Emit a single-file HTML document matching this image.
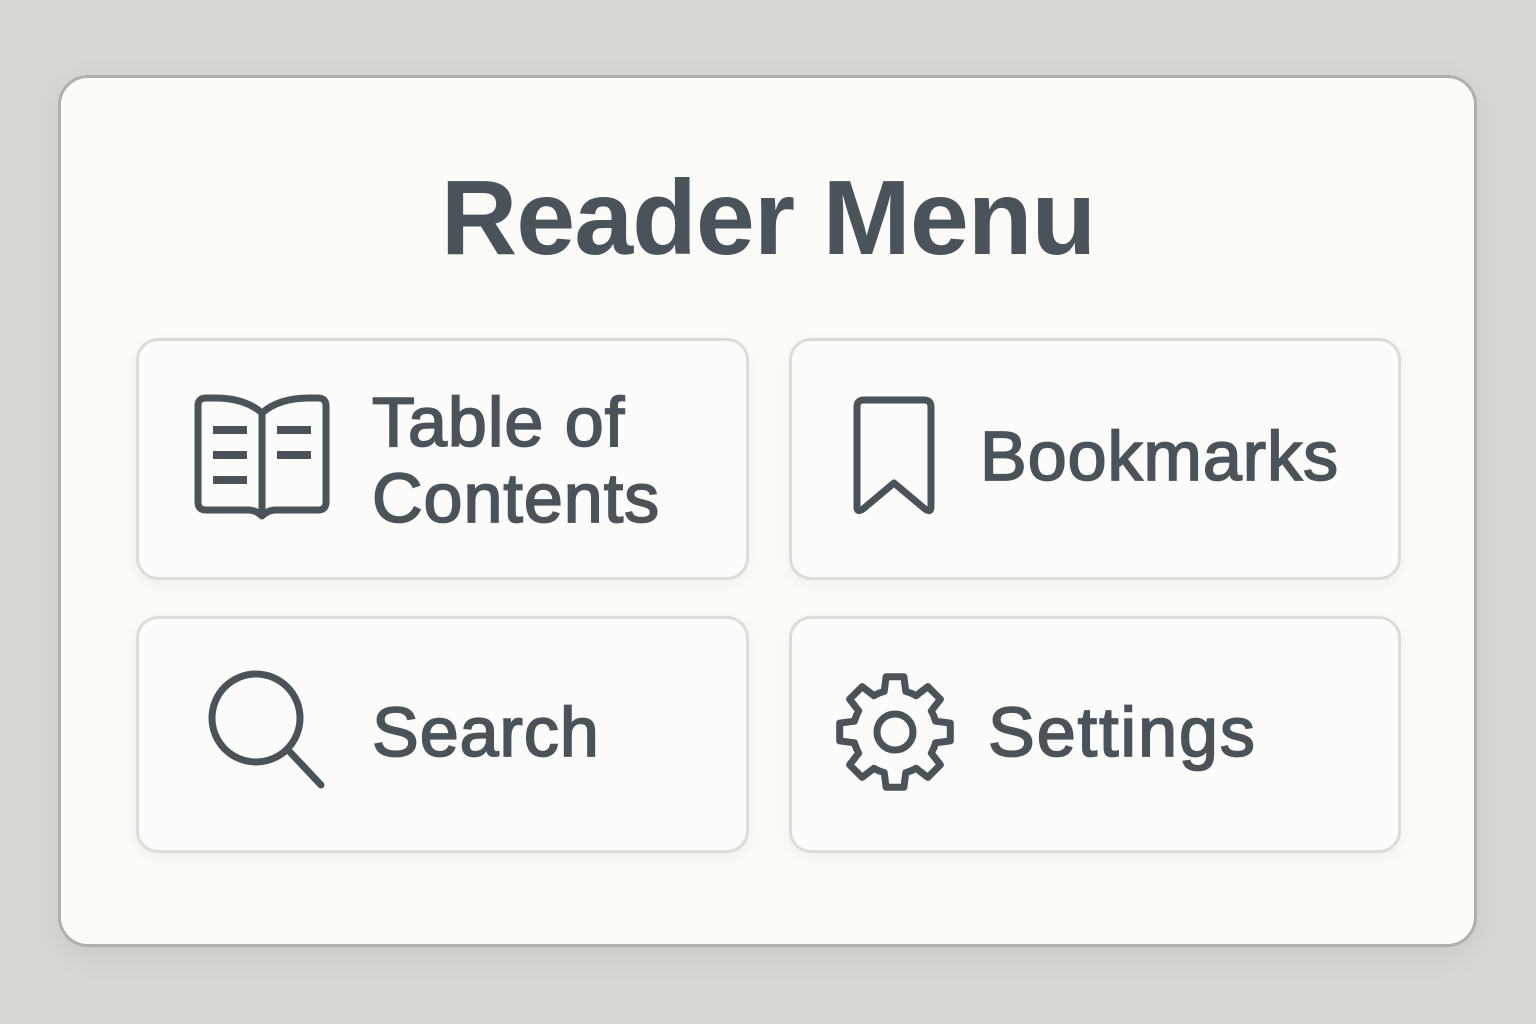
<!DOCTYPE html>
<html><head><meta charset="utf-8"><style>
html,body{margin:0;padding:0}
body{width:1536px;height:1024px;background:#d9d8d3;position:relative;overflow:hidden;font-family:"Liberation Sans",sans-serif;color:#4a525a}
.panel{position:absolute;left:58px;top:75px;width:1413px;height:866px;background:#fbfbf8;border:3px solid #b0b0ac;border-radius:30px;box-shadow:0 8px 30px rgba(0,0,0,0.08)}
h1{position:absolute;left:0;width:1536px;top:158px;margin:0;text-align:center;font-size:106px;font-weight:700;line-height:120px;letter-spacing:-1px}
.btn{position:absolute;background:#fcfcfa;border:3px solid #dcdcd8;border-radius:22px;box-sizing:border-box;box-shadow:0 4px 12px rgba(0,0,0,0.05)}
.lbl{position:absolute;font-size:70px;font-weight:400;-webkit-text-stroke:1.8px #4a525a;line-height:76px;letter-spacing:1px}
svg{position:absolute;left:0;top:0}
</style></head><body>
<div class="panel"></div>
<h1>Reader Menu</h1>
<div class="btn" style="left:136px;top:338px;width:613px;height:242px"></div>
<div class="btn" style="left:789px;top:338px;width:612px;height:242px"></div>
<div class="btn" style="left:136px;top:616px;width:613px;height:237px"></div>
<div class="btn" style="left:789px;top:616px;width:612px;height:237px"></div>
<div class="lbl" style="left:372px;top:384px">Table of<br>Contents</div>
<div class="lbl" style="left:980px;top:418px">Bookmarks</div>
<div class="lbl" style="left:372px;top:694px">Search</div>
<div class="lbl" style="left:988px;top:694px;letter-spacing:2px">Settings</div>
<svg width="1536" height="1024" fill="none" stroke="#4a525a" stroke-width="7" stroke-linecap="round" stroke-linejoin="round">
<path d="M262 413 Q245 398 215 398 H206 Q198 398 198 406 V502 Q198 510 206 510 H248 Q256 510 262 516 Q268 510 276 510 H318 Q326 510 326 502 V406 Q326 398 318 398 H309 Q279 398 262 413 Z M262 413 V514"/>
<path stroke-linecap="butt" stroke-width="8" d="M213 430 H247 M213 455 H247 M213 480 H247 M277 430 H311 M277 455 H311"/>
<path d="M864 400 H924 Q931 400 931 407 V507 Q931 513 925 509 L894 483 L863 509 Q857 513 857 507 V407 Q857 400 864 400 Z"/>
<circle cx="256" cy="718" r="44"/>
<path d="M289 751 L321 785"/>
<path id="gear" d=""/>
<circle cx="895" cy="732" r="18"/>
</svg>
<script>
(function(){var cx=895,cy=732,R=56,r=42,n=8,d="";
for(var i=0;i<n;i++){var a=i*2*Math.PI/n-Math.PI/2;var w=0.2,g=0.26;
var pts=[[r,a-g],[R,a-w*0.8],[R,a+w*0.8],[r,a+g]];
pts.forEach(function(p,j){var x=cx+p[0]*Math.cos(p[1]),y=cy+p[0]*Math.sin(p[1]);d+=(i==0&&j==0?"M":"L")+x.toFixed(1)+" "+y.toFixed(1)+" ";});
var a2=a+2*Math.PI/n-g;d+="A"+r+" "+r+" 0 0 1 "+(cx+r*Math.cos(a2)).toFixed(1)+" "+(cy+r*Math.sin(a2)).toFixed(1)+" ";}
document.getElementById("gear").setAttribute("d",d+"Z");})();
</script>
</body></html>
